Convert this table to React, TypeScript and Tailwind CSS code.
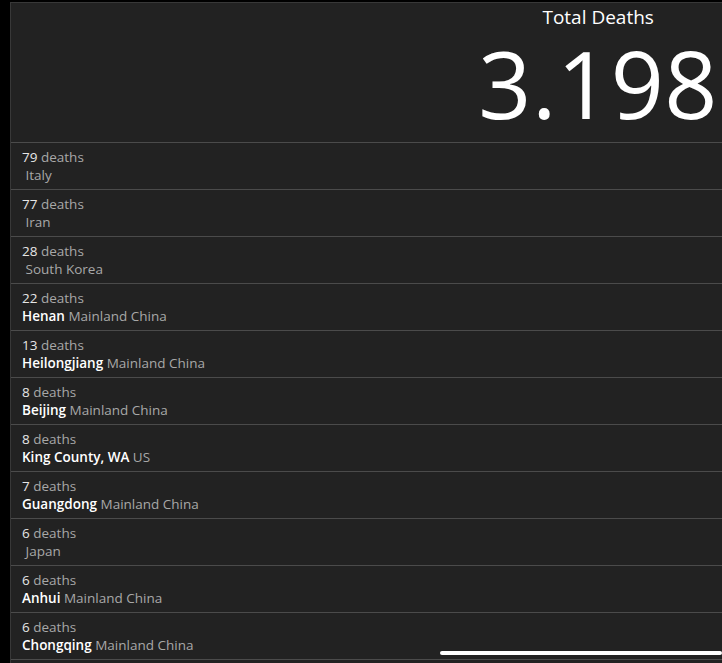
import React from "react";

const rows: { n: number; bold?: string; place: string }[] = [
  { n: 79, place: "Italy" },
  { n: 77, place: "Iran" },
  { n: 28, place: "South Korea" },
  { n: 22, bold: "Henan", place: "Mainland China" },
  { n: 13, bold: "Heilongjiang", place: "Mainland China" },
  { n: 8, bold: "Beijing", place: "Mainland China" },
  { n: 8, bold: "King County, WA", place: "US" },
  { n: 7, bold: "Guangdong", place: "Mainland China" },
  { n: 6, place: "Japan" },
  { n: 6, bold: "Anhui", place: "Mainland China" },
  { n: 6, bold: "Chongqing", place: "Mainland China" },
];

export default function App() {
  return (
    <div
      className="w-[722px] h-[663px] bg-black pl-[10px] pt-[2px] overflow-hidden relative"
      style={{ fontFamily: "'Open Sans', 'Noto Sans', sans-serif" }}
    >
      <div className="h-full bg-[#222222] border-t border-l border-[#383838] flex flex-col">
        <div className="h-[139px] flex justify-end shrink-0 pr-[4px]">
          <div className="flex flex-col items-center">
            <div className="text-[19px] text-white mt-[2px] leading-[24px]">Total Deaths</div>
            <div className="text-[93px] font-medium text-white leading-none mt-[8px] tracking-[0.5px]">3.198</div>
          </div>
        </div>
        {rows.map((r, i) => (
          <div key={i} className="h-[47px] shrink-0 border-t border-[#4b4b4b] pl-[11px] pt-[5px] text-[13.5px] leading-[18px]">
            <div>
              <span className="text-[#e6e6e6]">{r.n}</span>
              <span className="text-[#a8a8a8]"> deaths</span>
            </div>
            <div>
              {r.bold ? (
                <span className="text-white font-semibold">{r.bold}</span>
              ) : null}
              <span className="text-[#a8a8a8]">{"\u00a0"}{r.place}</span>
            </div>
          </div>
        ))}
        <div className="h-[47px] shrink-0 border-t border-[#4b4b4b]" />
      </div>
      <div className="absolute left-[440px] right-0 top-[651px] h-[4px] rounded-full bg-white" />
    </div>
  );
}
